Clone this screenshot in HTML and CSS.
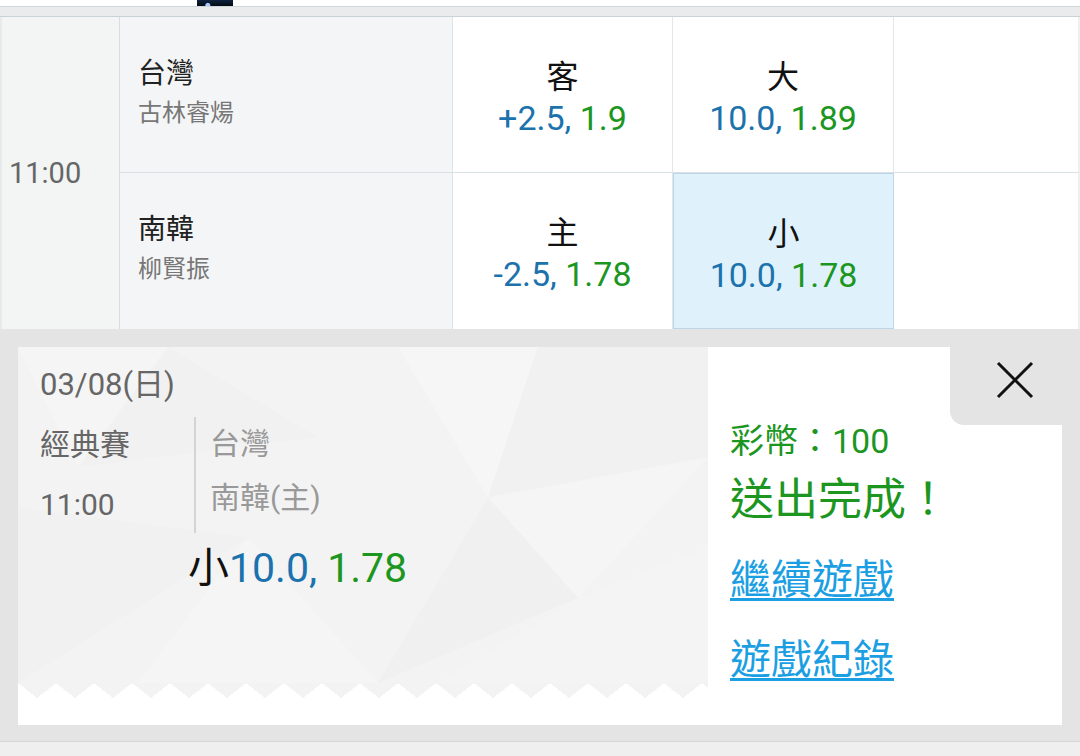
FILE: index.html
```html
<!DOCTYPE html>
<html lang="zh-Hant">
<head>
  <meta charset="UTF-8">
  <meta name="viewport" content="width=device-width, initial-scale=1.0">
  <title>投注完成</title>
  <link rel="stylesheet" href="styles.css">
</head>
<body>
<div class="top-strip"><span class="thumb"></span></div>
<div class="tab-bar"></div>

<div class="match">
  <div class="time-cell">11:00</div>

  <div class="team-cell row-top">
    <div class="team-name">台灣</div>
    <div class="pitcher">古林睿煬</div>
  </div>
  <div class="odds-cell row-top">
    <div class="odds-label">客</div>
    <div class="odds-val"><span class="line">+2.5,</span> <span class="rate">1.9</span></div>
  </div>
  <div class="odds-cell row-top">
    <div class="odds-label">大</div>
    <div class="odds-val"><span class="line">10.0,</span> <span class="rate">1.89</span></div>
  </div>
  <div class="odds-cell empty row-top"></div>

  <div class="team-cell">
    <div class="team-name">南韓</div>
    <div class="pitcher">柳賢振</div>
  </div>
  <div class="odds-cell">
    <div class="odds-label">主</div>
    <div class="odds-val"><span class="line">-2.5,</span> <span class="rate">1.78</span></div>
  </div>
  <div class="odds-cell selected">
    <div class="odds-label">小</div>
    <div class="odds-val"><span class="line">10.0,</span> <span class="rate">1.78</span></div>
  </div>
  <div class="odds-cell empty"></div>
</div>

<div class="result-area">
  <div class="ticket">
    <div class="ticket-left">
      <div class="ticket-body">
        <!-- low poly backdrop -->
        <svg class="ticket-bg" viewBox="0 0 690 335" preserveAspectRatio="none">
          <polygon points="0,0 150,0 60,120" fill="#f5f5f5"/>
          <polygon points="150,0 60,120 300,90" fill="#f1f1f1"/>
          <polygon points="380,0 520,0 470,150" fill="#f6f6f6"/>
          <polygon points="520,0 690,0 690,110 470,150" fill="#f1f1f1"/>
          <polygon points="690,110 470,150 560,250" fill="#f5f5f5"/>
          <polygon points="0,160 230,190 0,335" fill="#f1f1f1"/>
          <polygon points="230,190 120,335 360,335" fill="#f5f5f5"/>
          <polygon points="360,335 470,150 560,250" fill="#f0f0f0"/>
          <polygon points="560,250 690,200 690,335 420,335" fill="#f4f4f4"/>
        </svg>
        <div class="ticket-date">03/08(日)</div>
        <div class="ticket-row">
          <div class="ticket-meta">
            <div>經典賽</div>
            <div>11:00</div>
          </div>
          <div class="ticket-teams">
            <div>台灣</div>
            <div>南韓(主)</div>
          </div>
        </div>
        <div class="ticket-pick">小<span class="line">10.0,</span> <span class="rate">1.78</span></div>
      </div>
      <div class="ticket-edge"></div>
    </div>

    <div class="ticket-right">
      <div class="close-tab" role="button" aria-label="close">
        <svg width="38" height="38" viewBox="0 0 38 38">
          <path d="M2 2 L36 36 M36 2 L2 36" stroke="#111" stroke-width="3" fill="none"/>
        </svg>
      </div>
      <div class="coins">彩幣：100</div>
      <div class="done">送出完成！</div>
      <a href="#" class="result-link">繼續遊戲</a>
      <a href="#" class="result-link">遊戲紀錄</a>
    </div>
  </div>
</div>
<div class="footer-bar"></div>
</body>
</html>
```

FILE: styles.css
```css
* { margin: 0; padding: 0; box-sizing: border-box; }
body {
  font-family: Roboto, "Noto Sans CJK TC", sans-serif;
  background: #e4e4e4;
  color: #222;
  width: 1080px;
  height: 756px;
  overflow: hidden;
}

/* top of the list */
.top-strip {
  height: 7px;
  background: #fff;
  border-bottom: 1px solid #cfd7da;
  padding-left: 197px;
}
.thumb {
  display: block;
  width: 36px;
  height: 6px;
  background: radial-gradient(circle at 30% 90%, #a8ccff 0 2px, transparent 3px), linear-gradient(#0d2340, #040a14);
}
.tab-bar {
  height: 10px;
  background: #e9ebec;
  border-bottom: 1px solid #c9d2d6;
}

/* match table */
.match {
  display: grid;
  grid-template-columns: 120px 333px 220px 221px 1fr;
  grid-template-rows: 156px 156px;
  background: #fff;
}
.time-cell {
  grid-row: span 2;
  display: flex;
  align-items: center;
  padding-left: 7px;
  background: #f3f4f4;
  border-left: 2px solid #e6eaec;
  border-right: 1px solid #d6dee2;
  font-size: 29px;
  color: #666;
}
.row-top { border-bottom: 1px solid #d9e1e5; }
.team-cell {
  background: #f4f5f6;
  border-right: 1px solid #dde4e8;
  padding: 39px 0 0 18px;
}
.team-name {
  font-size: 28px;
  line-height: 36px;
  color: #222;
}
.pitcher {
  font-size: 24px;
  line-height: 30px;
  margin-top: 6px;
  color: #777;
}
.odds-cell {
  border-right: 1px solid #e1e8ec;
  text-align: center;
  padding-top: 40px;
}
.odds-cell.empty { border-right: 2px solid #eef1f3; }
.odds-cell.selected {
  background: #dff2fb;
  border: 1px solid #bdd5e6;
}
.odds-label {
  font-size: 32px;
  line-height: 40px;
  color: #111;
}
.odds-val {
  font-size: 34px;
  line-height: 42px;
}
.line { color: #1b72ad; }
.rate { color: #1c961f; }

/* result ticket */
.result-area {
  padding: 18px 18px 16px;
}
.ticket {
  display: flex;
  height: 378px;
  background: #fff;
}
.ticket-left {
  width: 690px;
}
.ticket-body {
  position: relative;
  height: 336px;
  background: #f3f3f3;
  overflow: hidden;
  padding: 18px 0 0 22px;
}
.ticket-bg {
  position: absolute;
  top: 0;
  left: 0;
  width: 100%;
  height: 100%;
}
.ticket-date,
.ticket-row,
.ticket-pick { position: relative; }
.ticket-date {
  font-size: 31px;
  line-height: 40px;
  color: #666;
}
.ticket-row {
  display: flex;
  margin-top: 12px;
}
.ticket-meta {
  width: 154px;
  font-size: 30px;
  line-height: 56px;
  color: #666;
  display: flex;
  flex-direction: column;
  gap: 4px;
}
.ticket-teams {
  border-left: 2px solid #d4d4d4;
  padding-left: 14px;
  font-size: 30px;
  line-height: 54px;
  color: #999;
}
.ticket-pick {
  margin: 10px 0 0 148px;
  font-size: 41px;
  line-height: 50px;
  color: #111;
}
.ticket-edge {
  height: 15px;
  background: conic-gradient(from -52deg at 50% 100%, #f3f3f3 104deg, transparent 0) 0 0 / 38px 100% repeat-x;
}

.ticket-right {
  position: relative;
  flex: 1;
  padding: 74px 0 0 22px;
}
.close-tab {
  position: absolute;
  top: 0;
  right: 0;
  width: 112px;
  height: 78px;
  background: #e4e4e4;
  border-bottom-left-radius: 14px;
  padding: 14px 0 0 46px;
}
.close-tab svg { display: block; }
.coins {
  font-size: 34px;
  line-height: 40px;
  color: #1c961f;
}
.done {
  margin-top: 11px;
  font-size: 44px;
  line-height: 56px;
  color: #1c961f;
}
.result-link {
  display: block;
  width: max-content;
  margin-top: 24px;
  font-size: 41px;
  line-height: 56px;
  color: #1c9fe2;
  text-decoration: underline;
  text-decoration-thickness: 3px;
  text-underline-offset: 4px;
}

.footer-bar {
  height: 16px;
  background: #efefef;
  border-top: 1px solid #d6d6d6;
}
```
